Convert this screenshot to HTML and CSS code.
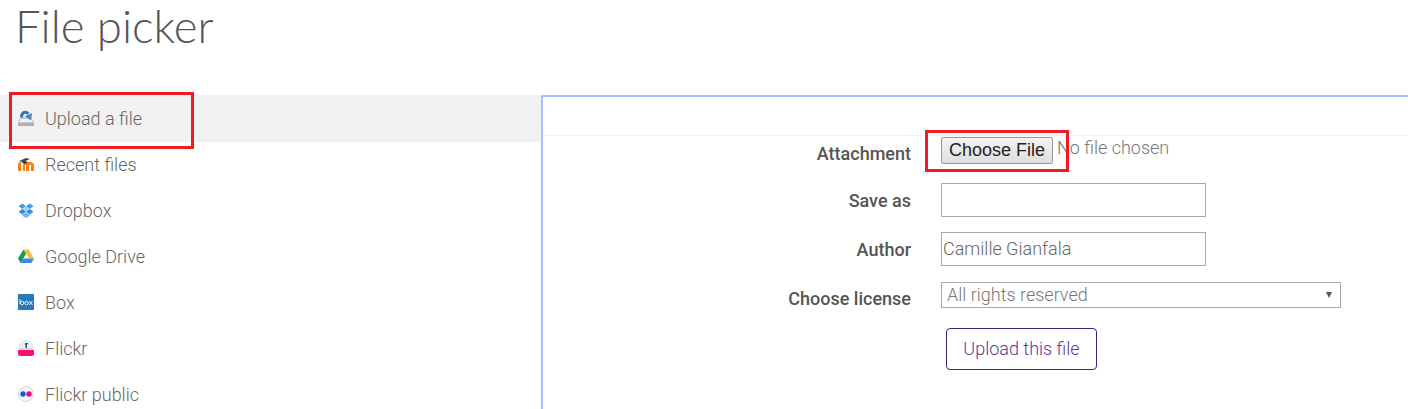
FILE: index.html
```html
<!DOCTYPE html>
<html lang="en">
<head>
    <meta charset="UTF-8">
    <title>File picker</title>
    <link rel="stylesheet" href="styles.css">
</head>
<body>

<h1 class="title">File picker</h1>

<div class="picker">
    <ul class="repos">
        <li class="repo active">
            <svg class="icon" viewBox="0 0 16 16"><path d="M0 16v-4l3-5h10l3 5v4z" fill="#c6cacd"/><path d="M0 13h16v3H0z" fill="#aeb2b5"/><path d="M3 9h10l1.500 3h-13z" fill="#eef0f1"/><path d="M3.500 7.500C3.500 2.500 7 1 10.500 3.500" fill="none" stroke="#3b76b5" stroke-width="3"/><path d="M7 6l7-3-1 7.500z" fill="#4a84c4"/></svg>
            <span>Upload a file</span>
        </li>
        <li class="repo">
            <svg class="icon" viewBox="0 0 16 16"><path d="M0 15V9c0-2 1-3 2-3h1v9z" fill="#f98012"/><path d="M5 15V9c0-2 2-3 3-3h4c2 0 4 1 4 3v6h-3V9h-2v6H8V9H7v6z" fill="#f98012"/><path d="M1 5l7-3 4 1-7 3z" fill="#444"/><path d="M3 6l4-1 3 1-3 2z" fill="#333"/></svg>
            <span>Recent files</span>
        </li>
        <li class="repo">
            <svg class="icon" viewBox="0 0 16 16"><path d="M4.300 1.500L8 4.200 4.300 7 0.500 4.300z" fill="#3f9ce9"/><path d="M11.700 1.500l3.800 2.800L11.700 7 8 4.200z" fill="#3f9ce9"/><path d="M4.300 7L8 4.200 11.700 7 8 9.700z" fill="#a9d6f7"/><path d="M4.300 7L8 9.700 4.300 12.400 0.500 9.700z" fill="#2f8fe2"/><path d="M11.700 7l3.800 2.700-3.800 2.700L8 9.700z" fill="#2f8fe2"/><path d="M4.300 13L8 10.500l3.700 2.500v.8L8 16l-3.700-2.200z" fill="#6db6f0"/></svg>
            <span>Dropbox</span>
        </li>
        <li class="repo">
            <svg class="icon" viewBox="0 0 16 16"><path d="M5.500 1.500h5L16 10.500h-5z" fill="#fbc02d"/><path d="M5.500 1.500L0 10.500l2.500 4.500L8 6z" fill="#109d58"/><path d="M2.500 15h11l2.500-4.500H5z" fill="#4285f4"/></svg>
            <span>Google Drive</span>
        </li>
        <li class="repo">
            <svg class="icon" viewBox="0 0 16 16"><path d="M0 0h16v16H0z" fill="#2a7ab5"/><g fill="none" stroke="#e4f0f9" stroke-width="1"><path d="M2 5v5"/><circle cx="4" cy="9" r="1.700"/><circle cx="8.500" cy="9" r="1.700"/><path d="M11 7l3.500 4M14.500 7L11 11"/></g></svg>
            <span>Box</span>
        </li>
        <li class="repo">
            <svg class="icon" viewBox="0 0 16 16"><path d="M3 0h10l2 3v7H1V3z" fill="#eceeef"/><path d="M1 8h14v3H1z" fill="#d4d6d7"/><path d="M0 10h16v4c0 1-1 2-2 2H2c-1 0-2-1-2-2z" fill="#ff0f6e"/><path d="M7 3h3v1.200H9V8H7.500V5H7z" fill="#1a5bb8"/></svg>
            <span>Flickr</span>
        </li>
        <li class="repo">
            <svg class="icon" viewBox="0 0 16 16"><circle cx="8" cy="8" r="7.500" fill="#f6f6f6" stroke="#d4d4d4"/><circle cx="5" cy="8" r="2.700" fill="#0f5fdc"/><circle cx="11" cy="8" r="2.700" fill="#ff0084"/></svg>
            <span>Flickr public</span>
        </li>
    </ul>

    <div class="panel">
        <div class="panel-head"></div>
        <form class="upload-form">
            <div class="row row-file">
                <label>Attachment</label>
                <input type="file" class="file-input">
            </div>
            <div class="row row-text">
                <label>Save as</label>
                <input type="text" class="text-input">
            </div>
            <div class="row row-text row-author">
                <label>Author</label>
                <input type="text" class="text-input" value="Camille Gianfala">
            </div>
            <div class="row row-select">
                <label>Choose license</label>
                <div class="license-wrap">
                    <select class="license">
                        <option>All rights reserved</option>
                    </select>
                </div>
            </div>
            <div class="row row-submit">
                <button type="button" class="submit">Upload this file</button>
            </div>
        </form>
    </div>
</div>

<!-- red annotation boxes drawn on top of the screenshot -->
<div class="mark mark-repo"></div>
<div class="mark mark-file"></div>

</body>
</html>
```

FILE: styles.css
```css
html, body { height: 409px; overflow: hidden; }
body {
    margin: 0;
    position: relative;
    background: #fff;
    font-family: Roboto, "Liberation Sans", sans-serif;
    font-weight: 300;
    font-size: 18px;
    color: #666;
}

.title {
    margin: 0;
    height: 95px;
    box-sizing: border-box;
    padding: 0 0 0 15px;
    font-family: Lato, "Open Sans", sans-serif;
    font-weight: 300;
    font-size: 45.500px;
    line-height: 52px;
    color: #555;
}

.picker { display: flex; align-items: flex-start; }

.repos {
    list-style: none;
    margin: 0;
    padding: 0;
    width: 541px;
    flex: none;
}
.repo {
    display: flex;
    align-items: center;
    height: 46px;
    padding-left: 18px;
}
.repo.active { background: #f1f1f1; height: 47px; margin-bottom: -1px; padding-bottom: 1px; box-sizing: border-box; }
.icon { width: 16px; height: 16px; flex: none; margin-right: 11px; }

.panel {
    flex: 1;
    height: 314px;
    border-top: 2px solid #a3c2fb;
    border-left: 2px solid #a3c2fb;
    border-top-left-radius: 2px;
}
.panel-head { height: 38px; border-bottom: 1px solid #f2f2f2; }

.row { display: flex; align-items: flex-start; }
.row label {
    width: 368px;
    margin-right: 30px;
    flex: none;
    text-align: right;
    font-weight: 500;
    font-size: 18px;
    color: #555;
}
.row-file { height: 46px; padding-top: 1px; }
.row-file label { padding-top: 7px; line-height: 20px; }
.row-text { height: 49px; }
.row-author { height: 50px; }
.row-text label { line-height: 36px; }
.row-select { height: 46px; }
.row-select label { line-height: 34px; }
.row-submit { padding-left: 403px; }

.file-input { font-family: Roboto, sans-serif; font-weight: 300; font-size: 18px; color: #777; width: 300px; }
.file-input::file-selector-button {
    width: 112px;
    height: 27px;
    margin-right: 4px;
    padding: 0;
    border: 1px solid #999;
    border-radius: 2px;
    background: linear-gradient(#f4f4f4, #dedede);
    font-family: "Liberation Sans", Arial, sans-serif;
    font-size: 18px;
    color: #222;
    vertical-align: -2px;
}

.text-input {
    width: 265px;
    height: 34px;
    box-sizing: border-box;
    padding: 0 1px 2px;
    border: 1px solid #a9a9a9;
    font-family: Roboto, sans-serif;
    font-weight: 300;
    font-size: 18px;
    color: #666;
    outline: none;
}

.license-wrap { position: relative; width: 400px; height: 26px; }
/* small arrow of the native select */
.license-wrap::after {
    content: "";
    position: absolute;
    right: 9px;
    top: 10px;
    border-left: 3px solid transparent;
    border-right: 3px solid transparent;
    border-top: 6px solid #555;
}
.license {
    appearance: none;
    width: 100%;
    height: 26px;
    box-sizing: border-box;
    padding: 0 0 1px 5px;
    border: 1px solid #a9a9a9;
    border-radius: 0;
    background: #fff;
    font-family: Roboto, sans-serif;
    font-weight: 300;
    font-size: 18px;
    color: #777;
}

.submit {
    width: 151px;
    height: 42px;
    box-sizing: border-box;
    padding: 0 0 2px;
    border: 1px solid #41217f;
    border-radius: 4px;
    background: #fff;
    font-family: Roboto, sans-serif;
    font-weight: 300;
    font-size: 18px;
    color: #5b3a94;
}

.mark { position: absolute; box-sizing: border-box; border: 3px solid #ed1c24; }
.mark-repo { left: 9px; top: 92px; width: 185px; height: 57px; }
.mark-file { left: 925px; top: 130px; width: 144px; height: 42px; }
```
